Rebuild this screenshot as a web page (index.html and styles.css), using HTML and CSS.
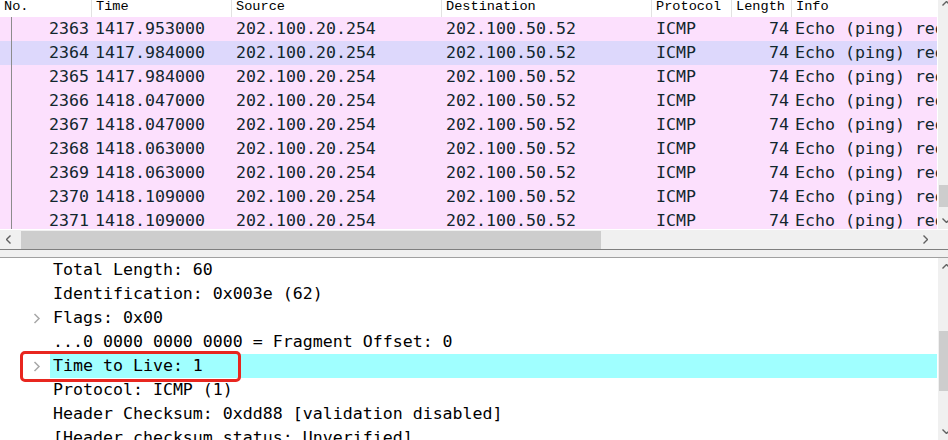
FILE: index.html
```html
<!DOCTYPE html>
<html lang="en">
<head>
    <meta charset="UTF-8">
    <title>Packet list</title>
    <link rel="stylesheet" href="styles.css">
</head>
<body>
    <div class="packet-list">
        <div class="list-top">
            <div class="list-main">
                <div class="list-head">
                    <div class="col c-no">No.</div>
                    <div class="col c-time">Time</div>
                    <div class="col c-src">Source</div>
                    <div class="col c-dst">Destination</div>
                    <div class="col c-proto">Protocol</div>
                    <div class="col c-len">Length</div>
                    <div class="col c-info">Info</div>
                </div>
                <div class="list-rows" id="rows"></div>
            </div>
            <div class="vscroll">
                <div class="arrow arrow-up-top">
                    <svg width="9" height="5" viewBox="0 0 9 5"><polyline points="0.5,4.5 4.5,0.5 8.5,4.5" fill="none" stroke="#606060" stroke-width="1.4"/></svg>
                </div>
                <div class="spacer"></div>
                <div class="thumb thumb-top"></div>
                <div class="gap"></div>
                <div class="arrow">
                    <svg width="9" height="5" viewBox="0 0 9 5"><polyline points="0.5,0.5 4.5,4.5 8.5,0.5" fill="none" stroke="#606060" stroke-width="1.4"/></svg>
                </div>
            </div>
        </div>
        <div class="hscroll">
            <div class="arrow">
                <svg width="5" height="9" viewBox="0 0 5 9"><polyline points="4.5,0.5 0.5,4.5 4.5,8.5" fill="none" stroke="#606060" stroke-width="1.4"/></svg>
            </div>
            <div class="hthumb"></div>
            <div class="spacer"></div>
            <div class="arrow">
                <svg width="5" height="9" viewBox="0 0 5 9"><polyline points="0.5,0.5 4.5,4.5 0.5,8.5" fill="none" stroke="#606060" stroke-width="1.4"/></svg>
            </div>
        </div>
    </div>

    <div class="splitter"></div>

    <div class="details">
        <div class="tree">
            <div class="node"><span class="twisty"></span><span class="label">Total Length: 60</span></div>
            <div class="node"><span class="twisty"></span><span class="label">Identification: 0x003e (62)</span></div>
            <div class="node"><span class="twisty"><svg width="8" height="11" viewBox="0 0 8 11"><polyline points="1.5,1 6,5.5 1.5,10" fill="none" stroke="#a8a8a8" stroke-width="1.5"/></svg></span><span class="label">Flags: 0x00</span></div>
            <div class="node"><span class="twisty"></span><span class="label">...0 0000 0000 0000 = Fragment Offset: 0</span></div>
            <div class="node selected">
                <span class="twisty"><svg width="8" height="11" viewBox="0 0 8 11"><polyline points="1.5,1 6,5.5 1.5,10" fill="none" stroke="#a8a8a8" stroke-width="1.5"/></svg></span><span class="label">Time to Live: 1</span>
                <div class="mark"></div>
            </div>
            <div class="node"><span class="twisty"></span><span class="label">Protocol: ICMP (1)</span></div>
            <div class="node"><span class="twisty"></span><span class="label">Header Checksum: 0xdd88 [validation disabled]</span></div>
            <div class="node"><span class="twisty"></span><span class="label">[Header checksum status: Unverified]</span></div>
        </div>
        <div class="vscroll vscroll-lower">
            <div class="arrow">
                <svg width="9" height="5" viewBox="0 0 9 5"><polyline points="0.5,4.5 4.5,0.5 8.5,4.5" fill="none" stroke="#606060" stroke-width="1.4"/></svg>
            </div>
            <div class="lead"></div>
            <div class="thumb thumb-lower"></div>
            <div class="spacer"></div>
            <div class="arrow">
                <svg width="9" height="5" viewBox="0 0 9 5"><polyline points="0.5,0.5 4.5,4.5 8.5,0.5" fill="none" stroke="#606060" stroke-width="1.4"/></svg>
            </div>
        </div>
    </div>

    <script>
        const packets = [
            [2363, '1417.953000'], [2364, '1417.984000'], [2365, '1417.984000'],
            [2366, '1418.047000'], [2367, '1418.047000'], [2368, '1418.063000'],
            [2369, '1418.063000'], [2370, '1418.109000'], [2371, '1418.109000']
        ];

        document.getElementById('rows').innerHTML = packets.map(([no, time]) => `
            <div class="row${no === 2364 ? ' hover' : ''}">
                <div class="col c-no"><span class="rel"></span>${no}</div>
                <div class="col c-time">${time}</div>
                <div class="col c-src">202.100.20.254</div>
                <div class="col c-dst">202.100.50.52</div>
                <div class="col c-proto">ICMP</div>
                <div class="col c-len">74</div>
                <div class="col c-info">Echo (ping) req</div>
            </div>
        `).join('');
    </script>
</body>
</html>
```

FILE: styles.css
```css
html, body { margin: 0; padding: 0; overflow: hidden; background: #fff; }

body { width: 948px; height: 440px; }

.packet-list { width: 955px; }

.list-top { display: flex; height: 229px; }

.list-main { width: 937px; overflow: hidden; display: flex; flex-direction: column; }

.list-head { display: flex; height: 17px; background: #fff; font-family: "Liberation Mono", monospace; font-size: 13.6px; line-height: 13px; color: #000; }

.list-head .col { border-left: 1px solid #e2e2e2; padding-left: 4px; }

.list-head .c-no { border-left: none; }

.list-rows { flex: 1; overflow: hidden; }

.row { display: flex; height: 24px; line-height: 24px; background: #fce0fd; color: #12272e; font-family: "DejaVu Sans Mono", monospace; font-size: 16.6px; }

.row.hover { background: #ddd8fc; }

.col { flex: none; box-sizing: border-box; overflow: hidden; white-space: nowrap; }

.c-no { width: 91px; }
.c-time { width: 140px; }
.c-src { width: 210px; }
.c-dst { width: 210px; }
.c-proto { width: 80px; }
.c-len { width: 60px; }
.c-info { flex: 1; }

.row .col { padding-left: 4px; }

.row .c-src, .row .c-dst, .row .c-proto { padding-left: 5px; }

.row .c-no { display: flex; padding-left: 11px; padding-right: 2px; }

.row .c-no .rel { width: 1px; background: #8c8c8c; margin-right: auto; }

.row .c-len { text-align: right; padding-right: 2px; }

.vscroll { width: 17px; margin-left: 1px; background: #f0f0f0; display: flex; flex-direction: column; }

.vscroll .arrow { height: 17px; display: flex; align-items: center; justify-content: center; flex: none; }

.vscroll .arrow-up-top { height: 8px; align-items: flex-start; padding-top: 1px; box-sizing: border-box; }

.spacer { flex: 1; }

.thumb { flex: none; margin: 0 1px; background: #cdcdcd; }

.thumb-top { height: 22px; }

.gap { height: 5px; flex: none; }

.hscroll { display: flex; align-items: center; width: 948px; height: 21px; box-sizing: border-box; background: #f0f0f0; border-top: 1px solid #fff; border-bottom: 1px solid #7f7f7f; }

.hscroll .arrow { width: 17px; display: flex; justify-content: center; align-items: center; flex: none; }

.hscroll .arrow:last-child { margin-right: 14px; }

.hthumb { width: 580px; height: 18px; margin-left: 4px; background: #cdcdcd; }

.splitter { height: 7px; background: #f0f0f0; border-bottom: 1px solid #a0a0a0; }

.details { display: flex; height: 182px; width: 955px; }

.tree { width: 937px; font-family: "DejaVu Sans Mono", monospace; font-size: 16.6px; color: #000; }

.node { display: flex; height: 24px; line-height: 24px; position: relative; }

.twisty { width: 50px; flex: none; display: flex; align-items: center; padding-left: 33px; box-sizing: border-box; }

.label { flex: 1; padding-left: 3px; white-space: nowrap; }

.selected .label { background: #a0ffff; }

.mark { position: absolute; left: 20px; top: -3px; width: 221px; height: 31px; box-sizing: border-box; border: 3px solid #e8261f; border-radius: 5px; }

.vscroll-lower { height: 182px; }

.vscroll-lower .lead { height: 56px; flex: none; }

.thumb-lower { height: 60px; }
```
